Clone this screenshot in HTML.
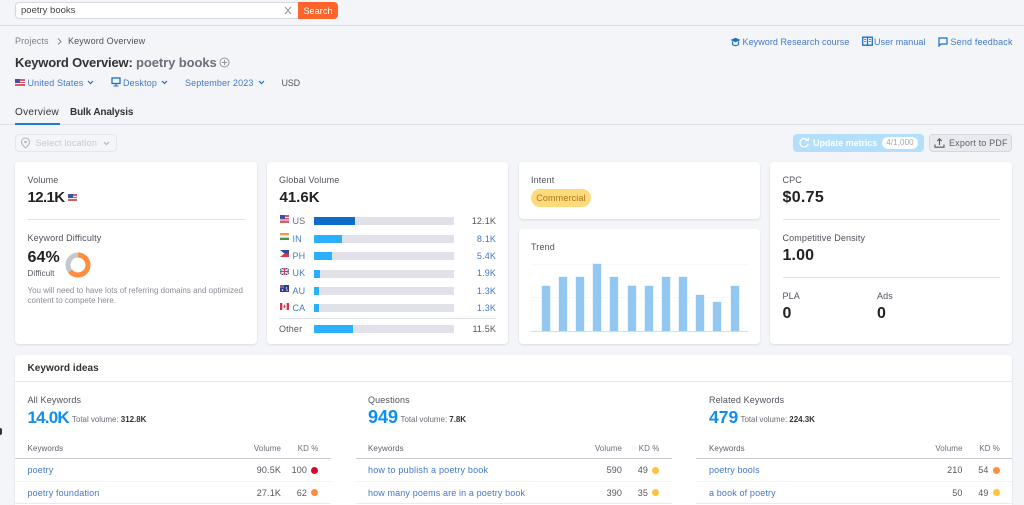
<!DOCTYPE html>
<html lang="en"><head><meta charset="utf-8"><title>Keyword Overview</title>
<style>
html,body{margin:0;padding:0;width:1024px;height:505px;overflow:hidden}
body{background:#f4f5f9;font-family:"Liberation Sans",sans-serif;color:#333;font-size:9px;letter-spacing:.14px}
#p{position:relative;width:1024px;height:505px;overflow:hidden;background:#f4f5f9;filter:blur(.25px)}
.a,.t{position:absolute}
.t{white-space:nowrap;line-height:14px;height:14px}
.r{text-align:right}
.l{color:#4279c6}
.g{color:#6c6e79}
.big{font-weight:bold;font-size:16px;color:#222;line-height:20px;height:20px}
.num{font-size:17px;font-weight:bold;color:#0d8ff2;line-height:21px;height:21px}
.tv{font-size:8px;color:#6c6e79;letter-spacing:-.04px}
.th{font-size:8px;letter-spacing:.08px;color:#6c6e79}
.card{position:absolute;background:#fff;border-radius:4px;box-shadow:0 1px 2px rgba(40,50,90,.13)}
.hr{position:absolute;height:1px;background:#e0e1e9}
.bar{position:absolute;left:314px;width:140px;height:8px;background:#e0e1e9}
.bar i{display:block;height:100%;background:#2bb0ff}
.dot{position:absolute;width:7px;height:7px;border-radius:50%}
.tb{position:absolute;width:8px;background:#92c7f1;height:auto;bottom:174px;box-shadow:0 0 0 .5px #d3e8f9}
svg{position:absolute;display:block}
</style></head><body><div id="p">

<!-- search -->
<div class="a" style="left:15px;top:2px;width:284px;height:17px;background:#fff;border:1px solid #d5d7de;border-right:0;border-radius:4px 0 0 4px;box-sizing:border-box"></div>
<div class="t" style="left:21px;top:4px;color:#444;font-size:9.5px;letter-spacing:0">poetry books</div>
<svg style="left:284px;top:6px" width="8" height="9" viewBox="0 0 8 9"><path d="M1 1l6 7M7 1L1 8" stroke="#9b9da6" stroke-width="1.2" fill="none"/></svg>
<div class="a" style="left:298px;top:2px;width:40px;height:17px;background:#ff642d;border-radius:0 4px 4px 0"></div>
<div class="t" style="left:298px;top:4px;width:40px;text-align:center;color:#fff;font-size:9px;letter-spacing:.1px">Search</div>
<div class="hr" style="left:0;top:25px;width:1024px;height:1px;background:#dcdee5"></div>

<!-- breadcrumbs -->
<div class="t g" style="left:15px;top:34px;color:#7d7f89">Projects</div>
<svg style="left:57px;top:38px" width="5" height="7" viewBox="0 0 5 7"><path d="M1 .5l3 3-3 3" stroke="#85878f" fill="none"/></svg>
<div class="t" style="left:68px;top:34px;color:#50525c">Keyword Overview</div>

<!-- title -->
<div class="t" style="left:15px;top:55px;font-size:13px;font-weight:bold;color:#333;letter-spacing:-.18px;line-height:16px;height:16px">Keyword Overview:</div>
<div class="t" style="left:136px;top:55px;font-size:13px;font-weight:bold;color:#6c6e79;letter-spacing:-.08px;line-height:16px;height:16px">poetry books</div>
<svg style="left:219px;top:57px" width="11" height="11" viewBox="0 0 11 11"><circle cx="5.500" cy="5.500" r="4.500" fill="none" stroke="#94969f"/><path d="M5.500 3v5M3 5.500h5" stroke="#94969f"/></svg>

<!-- sub row -->
<svg style="left:15px;top:79px" width="10" height="7" viewBox="0 0 10 7"><rect width="10" height="7" fill="#d65c6c"/><rect y="2" width="10" height="1" fill="#eee"/><rect y="4" width="10" height="1" fill="#eee"/><rect width="5" height="4" fill="#44509a"/></svg>
<div class="t l" style="left:27.500px;top:76px">United States</div>
<svg style="left:87px;top:80px" width="7" height="5" viewBox="0 0 7 5"><path d="M1 1l2.500 2.500L6 1" stroke="#1c6fc9" stroke-width="1.2" fill="none"/></svg>
<svg style="left:110.500px;top:77px" width="10" height="10" viewBox="0 0 10 10"><rect x="1" y="1" width="8" height="5.500" fill="none" stroke="#1c6fc9" stroke-width="1.300"/><path d="M5 7v1.500M2.500 9h5" stroke="#1c6fc9" stroke-width="1.100"/></svg>
<div class="t l" style="left:123px;top:76px">Desktop</div>
<svg style="left:161px;top:80px" width="7" height="5" viewBox="0 0 7 5"><path d="M1 1l2.500 2.500L6 1" stroke="#1c6fc9" stroke-width="1.2" fill="none"/></svg>
<div class="t l" style="left:185px;top:76px">September 2023</div>
<svg style="left:258px;top:80px" width="7" height="5" viewBox="0 0 7 5"><path d="M1 1l2.500 2.500L6 1" stroke="#1c6fc9" stroke-width="1.2" fill="none"/></svg>
<div class="t" style="left:281.500px;top:76px;color:#55565f;letter-spacing:-.2px">USD</div>

<!-- right links -->
<svg style="left:729.500px;top:37px" width="11" height="10" viewBox="0 0 11 10"><path d="M.5 3L5.500 .8 10.500 3 5.500 5.200z" fill="#1c6fc9"/><path d="M2.500 4.500v3c1.500 1.500 4.500 1.500 6 0v-3" fill="none" stroke="#1c6fc9" stroke-width="1.200"/></svg>
<div class="t l" style="left:742.500px;top:35px;letter-spacing:.06px">Keyword Research course</div>
<svg style="left:861.500px;top:36px" width="11" height="11" viewBox="0 0 11 11"><path d="M.7 1.200h9.600v8H.7zM5.500 1.200v8" fill="none" stroke="#1c6fc9" stroke-width="1.300"/><path d="M2 3.500h2M2 5.500h2M7 3.500h2M7 5.500h2" stroke="#1c6fc9" stroke-width=".8"/></svg>
<div class="t l" style="left:874px;top:35px;letter-spacing:.04px">User manual</div>
<svg style="left:938px;top:37px" width="10" height="10" viewBox="0 0 10 10"><path d="M1 1h8v6H3L1 9z" fill="none" stroke="#1c6fc9" stroke-width="1.200"/></svg>
<div class="t l" style="left:950.500px;top:35px;letter-spacing:.16px">Send feedback</div>

<!-- tabs -->
<div class="t" style="left:15px;top:105.500px;font-size:10px;color:#333;letter-spacing:.3px">Overview</div>
<div class="t" style="left:70px;top:105.500px;font-size:10px;color:#333;letter-spacing:-.15px;font-weight:bold">Bulk Analysis</div>
<div class="hr" style="left:0;top:124px;width:1024px;height:1px;background:#dcdee5"></div>
<div class="a" style="left:15px;top:122.500px;width:45px;height:2px;background:#1c7ad9"></div>

<!-- select location -->
<div class="a" style="left:15px;top:134px;width:102px;height:18px;border:1px solid #e5e6ec;border-radius:4px;box-sizing:border-box"></div>
<svg style="left:20px;top:137px" width="11" height="12" viewBox="0 0 11 12"><path d="M5.500 1a4 4 0 0 1 4 4c0 2.500-4 6-4 6s-4-3.500-4-6a4 4 0 0 1 4-4z" fill="none" stroke="#b5b7bf" stroke-width="1.100"/><circle cx="5.500" cy="5" r="1.300" fill="#b5b7bf"/></svg>
<div class="t" style="left:35.500px;top:136px;color:#c7c9d0;letter-spacing:.2px">Select location</div>
<svg style="left:103px;top:141px" width="7" height="5" viewBox="0 0 7 5"><path d="M1 1l2.500 2.500L6 1" stroke="#b0b2ba" stroke-width="1.200" fill="none"/></svg>

<!-- buttons -->
<div class="a" style="left:793px;top:134px;width:131px;height:18px;background:#b3dffc;border-radius:4px"></div>
<svg style="left:798px;top:137px" width="12" height="12" viewBox="0 0 12 12"><path d="M9.500 3.200A4.200 4.200 0 1 0 10.200 7" fill="none" stroke="#fff" stroke-width="1.300"/><path d="M7.500 3.600h2.800V.9" fill="none" stroke="#fff" stroke-width="1.100"/></svg>
<div class="t" style="left:813px;top:136px;color:#fff;font-weight:bold;letter-spacing:-.06px">Update metrics</div>
<div class="a" style="left:882px;top:137px;width:36px;height:12px;background:#fff;border-radius:6px"></div>
<div class="t" style="left:882px;top:136px;width:36px;text-align:center;color:#a3a5ae;font-size:8px;letter-spacing:.1px">4/1,000</div>
<div class="a" style="left:929px;top:134px;width:83px;height:18px;background:#e9eaef;border:1px solid #d5d7de;border-radius:4px;box-sizing:border-box"></div>
<svg style="left:934px;top:137px" width="11" height="12" viewBox="0 0 11 12"><path d="M5.500 8V2M3.300 4l2.200-2.200L7.700 4M1 7.500v2.700h9V7.500" fill="none" stroke="#55565f" stroke-width="1.100"/></svg>
<div class="t" style="left:949px;top:136px;color:#5f6069;letter-spacing:.16px">Export to PDF</div>

<!-- card 1 -->
<div class="card" style="left:15px;top:162px;width:242px;height:182px"></div>
<div class="t" style="left:27.500px;top:173px;color:#50525c">Volume</div>
<div class="t big" style="left:27.500px;top:188px;font-size:15px;letter-spacing:-.6px">12.1K</div>
<svg style="left:68px;top:194px" width="9" height="7" viewBox="0 0 9 7"><rect width="9" height="7" fill="#d65c6c"/><rect y="2" width="9" height="1" fill="#eee"/><rect y="4" width="9" height="1" fill="#eee"/><rect width="5" height="4" fill="#44509a"/></svg>
<div class="hr" style="left:27.500px;top:219px;width:217px"></div>
<div class="t" style="left:27.500px;top:231px;color:#50525c">Keyword Difficulty</div>
<div class="t big" style="left:27.500px;top:247.500px;letter-spacing:.1px">64%</div>
<div class="t" style="left:27.500px;top:267px;color:#55565f;font-size:8px;letter-spacing:.1px">Difficult</div>
<svg style="left:65px;top:252px" width="26" height="26" viewBox="0 0 26 26"><circle cx="13" cy="13" r="10" fill="none" stroke="#c4c7cf" stroke-width="5"/><circle cx="13" cy="13" r="10" fill="none" stroke="#ff8e3f" stroke-width="5" stroke-dasharray="40.200 62.830" transform="rotate(-90 13 13)"/></svg>
<div class="t" style="left:27.500px;top:284px;color:#8b8d96;font-size:8px;letter-spacing:0">You will need to have lots of referring domains and optimized</div>
<div class="t" style="left:27.500px;top:294px;color:#8b8d96;font-size:8px;letter-spacing:0">content to compete here.</div>

<!-- card 2 -->
<div class="card" style="left:267px;top:162px;width:241px;height:182px"></div>
<div class="t" style="left:279px;top:173px;color:#50525c">Global Volume</div>
<div class="t big" style="left:279.500px;top:188px;font-size:15px;letter-spacing:0">41.6K</div>

<svg style="left:280px;top:215px" width="9" height="8" viewBox="0 0 9 8"><rect width="9" height="8" fill="#d65c6c"/><rect y="2" width="9" height="1" fill="#eee"/><rect y="4.500" width="9" height="1" fill="#eee"/><rect width="5" height="4" fill="#44509a"/></svg>
<div class="t g" style="left:292.500px;top:214px">US</div>
<div class="bar" style="top:217px"><i style="width:40.500px;background:#0b6fc9"></i></div>
<div class="t r g" style="left:440px;top:214px;width:56px;color:#55565f">12.1K</div>

<svg style="left:280px;top:233px" width="9" height="7" viewBox="0 0 9 7"><rect width="9" height="2.400" fill="#f39a46"/><rect y="2.400" width="9" height="2.300" fill="#f5f5f5"/><rect y="4.700" width="9" height="2.300" fill="#3d9a4a"/></svg>
<div class="t l" style="left:292.500px;top:231.500px">IN</div>
<div class="bar" style="top:234.500px"><i style="width:27.500px"></i></div>
<div class="t r l" style="left:440px;top:231.500px;width:56px">8.1K</div>

<svg style="left:280px;top:250px" width="9" height="7" viewBox="0 0 9 7"><rect width="9" height="3.500" fill="#2f4aa0"/><rect y="3.500" width="9" height="3.500" fill="#d63c46"/><path d="M0 0l4.500 3.500L0 7z" fill="#f5f5f5"/></svg>
<div class="t l" style="left:292.500px;top:249px">PH</div>
<div class="bar" style="top:252px"><i style="width:18px"></i></div>
<div class="t r l" style="left:440px;top:249px;width:56px">5.4K</div>

<svg style="left:280px;top:268px" width="9" height="7" viewBox="0 0 9 7"><rect width="9" height="7" fill="#3a4a94"/><path d="M0 0l9 7M9 0L0 7" stroke="#eee" stroke-width="1.200"/><path d="M4.500 0v7M0 3.500h9" stroke="#eee" stroke-width="2"/><path d="M4.500 0v7M0 3.500h9" stroke="#d63c46" stroke-width="1"/></svg>
<div class="t l" style="left:292.500px;top:266px">UK</div>
<div class="bar" style="top:269.500px"><i style="width:6px"></i></div>
<div class="t r l" style="left:440px;top:266px;width:56px">1.9K</div>

<svg style="left:280px;top:285px" width="9" height="7" viewBox="0 0 9 7"><rect width="9" height="7" fill="#2c3f8f"/><rect width="4" height="3" fill="#8a5f8f"/><circle cx="6.500" cy="3" r=".7" fill="#fff"/><circle cx="7" cy="5.200" r=".7" fill="#fff"/><circle cx="2.500" cy="5" r=".8" fill="#fff"/></svg>
<div class="t l" style="left:292.500px;top:283.500px">AU</div>
<div class="bar" style="top:287px"><i style="width:4.500px"></i></div>
<div class="t r l" style="left:440px;top:283.500px;width:56px">1.3K</div>

<svg style="left:280px;top:303px" width="9" height="7" viewBox="0 0 9 7"><rect width="9" height="7" fill="#f5f5f5"/><rect width="2.300" height="7" fill="#d8304a"/><rect x="6.700" width="2.300" height="7" fill="#d8304a"/><path d="M4.500 1.500l1.200 2.500-1.200 1-1.200-1z" fill="#d8304a"/></svg>
<div class="t l" style="left:292.500px;top:301px">CA</div>
<div class="bar" style="top:304px"><i style="width:4.500px"></i></div>
<div class="t r l" style="left:440px;top:301px;width:56px">1.3K</div>

<div class="hr" style="left:279px;top:318px;width:217px"></div>
<div class="t" style="left:279px;top:322px;color:#55565f">Other</div>
<div class="bar" style="top:325px"><i style="width:38.500px"></i></div>
<div class="t r" style="left:440px;top:322px;width:56px;color:#55565f">11.5K</div>

<!-- card 3 -->
<div class="card" style="left:519px;top:162px;width:241px;height:57px"></div>
<div class="t" style="left:531px;top:173px;color:#50525c">Intent</div>
<div class="a" style="left:531px;top:189px;width:60px;height:18px;background:#ffda7a;border-radius:9px"></div>
<div class="t" style="left:531px;top:191px;width:60px;text-align:center;color:#a9741f;letter-spacing:.15px">Commercial</div>

<!-- trend -->
<div class="card" style="left:519px;top:229px;width:241px;height:115px"></div>
<div class="t" style="left:531px;top:240px;color:#50525c">Trend</div>
<div class="hr" style="left:531px;top:264px;width:217px;background:#f8f8fa"></div>
<div class="hr" style="left:531px;top:297px;width:217px;background:#f8f8fa"></div>
<div class="tb" style="left:541.500px;top:286px"></div>
<div class="tb" style="left:558.500px;top:277px"></div>
<div class="tb" style="left:575.500px;top:277px"></div>
<div class="tb" style="left:593px;top:264px"></div>
<div class="tb" style="left:610px;top:277px"></div>
<div class="tb" style="left:627.500px;top:286px"></div>
<div class="tb" style="left:644.500px;top:286px"></div>
<div class="tb" style="left:661.500px;top:277px"></div>
<div class="tb" style="left:678.500px;top:277px"></div>
<div class="tb" style="left:696px;top:295px"></div>
<div class="tb" style="left:713px;top:302px"></div>
<div class="tb" style="left:730.500px;top:286px"></div>
<div class="hr" style="left:531px;top:331px;width:217px;background:#d9dae2"></div>

<!-- card 4 -->
<div class="card" style="left:770px;top:162px;width:242px;height:182px"></div>
<div class="t" style="left:782.500px;top:173px;color:#50525c">CPC</div>
<div class="t big" style="left:782.500px;top:187.500px;letter-spacing:.3px">$0.75</div>
<div class="hr" style="left:783px;top:219px;width:217px"></div>
<div class="t" style="left:782.500px;top:231px;color:#50525c">Competitive Density</div>
<div class="t big" style="left:782.500px;top:245.500px">1.00</div>
<div class="hr" style="left:783px;top:277px;width:217px"></div>
<div class="t" style="left:782.500px;top:289px;color:#50525c">PLA</div>
<div class="t big" style="left:782.500px;top:303.500px">0</div>
<div class="t" style="left:877px;top:289px;color:#50525c">Ads</div>
<div class="t big" style="left:877px;top:303.500px">0</div>

<!-- keyword ideas -->
<div class="card" style="left:15px;top:355px;width:997px;height:150px;border-radius:4px 4px 0 0"></div>
<div class="t" style="left:27.500px;top:361.500px;font-weight:bold;font-size:10px;color:#333;letter-spacing:.05px">Keyword ideas</div>
<div class="hr" style="left:15px;top:381px;width:997px;background:#e8e9ee"></div>

<!-- col 1 -->
<div class="t" style="left:27.500px;top:393px;color:#50525c">All Keywords</div>
<div class="t num" style="left:27.500px;top:407px;letter-spacing:-.8px">14.0K</div>
<div class="t tv" style="left:72px;top:413px">Total volume: <b style="color:#333">312.8K</b></div>
<div class="t th" style="left:27.500px;top:441.500px;color:#60626c">Keywords</div>
<div class="t r th" style="left:231px;top:441.500px;width:50px">Volume</div>
<div class="t r th" style="left:288px;top:441.500px;width:30.500px">KD %</div>
<div class="hr" style="left:15px;top:458px;width:316px;background:#c9cad6"></div>
<div class="t l" style="left:27.500px;top:463px">poetry</div>
<div class="t r" style="left:231px;top:463px;width:50px;color:#55565f">90.5K</div>
<div class="t r" style="left:280px;top:463px;width:27px;color:#55565f">100</div>
<div class="dot" style="left:311px;top:466.500px;background:#d5092f"></div>
<div class="hr" style="left:15px;top:481px;width:316px;background:#f2f3f6"></div>
<div class="t l" style="left:27.500px;top:485.500px">poetry foundation</div>
<div class="t r" style="left:231px;top:485.500px;width:50px;color:#55565f">27.1K</div>
<div class="t r" style="left:280px;top:485.500px;width:27px;color:#55565f">62</div>
<div class="dot" style="left:311px;top:489px;background:#ff8e3f"></div>
<div class="hr" style="left:15px;top:503px;width:316px;background:#e9eaef"></div>

<!-- col 2 -->
<div class="t" style="left:368px;top:393px;color:#50525c">Questions</div>
<div class="t num" style="left:368px;top:407px;font-size:18px;letter-spacing:0">949</div>
<div class="t tv" style="left:400.500px;top:413px">Total volume: <b style="color:#333">7.8K</b></div>
<div class="t th" style="left:368px;top:441.500px;color:#60626c">Keywords</div>
<div class="t r th" style="left:572px;top:441.500px;width:50px">Volume</div>
<div class="t r th" style="left:629px;top:441.500px;width:30.500px">KD %</div>
<div class="hr" style="left:356px;top:458px;width:316px;background:#c9cad6"></div>
<div class="t l" style="left:368px;top:463px;letter-spacing:.2px">how to publish a poetry book</div>
<div class="t r" style="left:572px;top:463px;width:50px;color:#55565f">590</div>
<div class="t r" style="left:621px;top:463px;width:27px;color:#55565f">49</div>
<div class="dot" style="left:652px;top:466.500px;background:#ffc23f"></div>
<div class="hr" style="left:356px;top:481px;width:316px;background:#f2f3f6"></div>
<div class="t l" style="left:368px;top:485.500px;letter-spacing:.13px">how many poems are in a poetry book</div>
<div class="t r" style="left:572px;top:485.500px;width:50px;color:#55565f">390</div>
<div class="t r" style="left:621px;top:485.500px;width:27px;color:#55565f">35</div>
<div class="dot" style="left:652px;top:489px;background:#ffc23f"></div>
<div class="hr" style="left:356px;top:503px;width:316px;background:#e9eaef"></div>

<!-- col 3 -->
<div class="t" style="left:709px;top:393px;color:#50525c">Related Keywords</div>
<div class="t num" style="left:709px;top:407px;font-size:17.500px;letter-spacing:0">479</div>
<div class="t tv" style="left:740.500px;top:413px">Total volume: <b style="color:#333">224.3K</b></div>
<div class="t th" style="left:709px;top:441.500px;color:#60626c">Keywords</div>
<div class="t r th" style="left:912.500px;top:441.500px;width:50px">Volume</div>
<div class="t r th" style="left:969.500px;top:441.500px;width:30.500px">KD %</div>
<div class="hr" style="left:696px;top:458px;width:316px;background:#c9cad6"></div>
<div class="t l" style="left:709px;top:463px">poetry bools</div>
<div class="t r" style="left:912.500px;top:463px;width:50px;color:#55565f">210</div>
<div class="t r" style="left:961.500px;top:463px;width:27px;color:#55565f">54</div>
<div class="dot" style="left:992.500px;top:466.500px;background:#ff8e3f"></div>
<div class="hr" style="left:696px;top:481px;width:316px;background:#f2f3f6"></div>
<div class="t l" style="left:709px;top:485.500px">a book of poetry</div>
<div class="t r" style="left:912.500px;top:485.500px;width:50px;color:#55565f">50</div>
<div class="t r" style="left:961.500px;top:485.500px;width:27px;color:#55565f">49</div>
<div class="dot" style="left:992.500px;top:489px;background:#ffc23f"></div>
<div class="hr" style="left:696px;top:503px;width:316px;background:#e9eaef"></div>

<!-- stray mark at the left edge -->
<div class="a" style="left:0;top:428px;width:2px;height:7px;background:#333;border-radius:0 2px 2px 0"></div>
</div></body></html>
